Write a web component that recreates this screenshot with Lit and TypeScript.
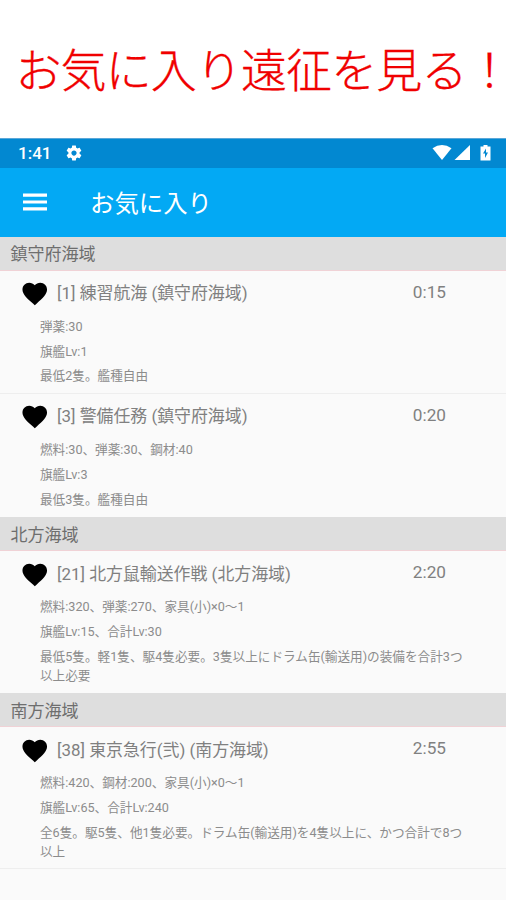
import { LitElement, html, css, svg } from "lit";
import { customElement, property } from "lit/decorators.js";

interface Expedition {
  no: number;
  name: string;
  time: string;
  details: string[];
}

interface Area {
  name: string;
  expeditions: Expedition[];
}

const AREAS: Area[] = [
  {
    name: "鎮守府海域",
    expeditions: [
      { no: 1, name: "練習航海", time: "0:15", details: ["弾薬:30", "旗艦Lv:1", "最低2隻。艦種自由"] },
      { no: 3, name: "警備任務", time: "0:20", details: ["燃料:30、弾薬:30、鋼材:40", "旗艦Lv:3", "最低3隻。艦種自由"] },
    ],
  },
  {
    name: "北方海域",
    expeditions: [
      {
        no: 21,
        name: "北方鼠輸送作戦",
        time: "2:20",
        details: [
          "燃料:320、弾薬:270、家具(小)×0〜1",
          "旗艦Lv:15、合計Lv:30",
          "最低5隻。軽1隻、駆4隻必要。3隻以上にドラム缶(輸送用)の装備を合計3つ以上必要",
        ],
      },
    ],
  },
  {
    name: "南方海域",
    expeditions: [
      {
        no: 38,
        name: "東京急行(弐)",
        time: "2:55",
        details: [
          "燃料:420、鋼材:200、家具(小)×0〜1",
          "旗艦Lv:65、合計Lv:240",
          "全6隻。駆5隻、他1隻必要。ドラム缶(輸送用)を4隻以上に、かつ合計で8つ以上",
        ],
      },
    ],
  },
];

const heart = svg`<path d="M12 21.35l-1.45-1.32C5.4 15.36 2 12.28 2 8.5 2 5.42 4.42 3 7.5 3c1.74 0 3.41.81 4.5 2.09C13.09 3.81 14.76 3 16.5 3 19.58 3 22 5.42 22 8.5c0 3.78-3.4 6.86-8.55 11.54L12 21.35z"/>`;
const gear = svg`<path d="M19.43 12.98c.04-.32.07-.64.07-.98s-.03-.66-.07-.98l2.11-1.65c.19-.15.24-.42.12-.64l-2-3.46c-.12-.22-.39-.3-.61-.22l-2.49 1c-.52-.4-1.08-.73-1.69-.98l-.38-2.65C14.46 2.18 14.25 2 14 2h-4c-.25 0-.46.18-.49.42l-.38 2.65c-.61.25-1.17.59-1.69.98l-2.49-1c-.23-.09-.49 0-.61.22l-2 3.46c-.13.22-.07.49.12.64l2.11 1.65c-.04.32-.07.65-.07.98s.03.66.07.98l-2.11 1.65c-.19.15-.24.42-.12.64l2 3.46c.12.22.39.3.61.22l2.49-1c.52.4 1.08.73 1.69.98l.38 2.65c.03.24.24.42.49.42h4c.25 0 .46-.18.49-.42l.38-2.65c.61-.25 1.17-.59 1.69-.98l2.49 1c.23.09.49 0 .61-.22l2-3.46c.12-.22.07-.49-.12-.64l-2.11-1.65zM12 15.5c-1.93 0-3.5-1.57-3.5-3.5s1.57-3.5 3.5-3.5 3.5 1.57 3.5 3.5-1.57 3.5-3.5 3.5z"/>`;

@customElement("expedition-row")
export class ExpeditionRow extends LitElement {
  @property({ attribute: false }) item!: Expedition;
  @property() area = "";

  static styles = css`
    :host {
      display: block;
      box-sizing: border-box;
      padding-bottom: 1.2px;
      border-bottom: 1px solid #eeeeee;
    }
    :host([flush]) { border-bottom-color: transparent; }
    .head {
      display: flex;
      align-items: center;
      height: 42.5px;
      padding: 0 60px 0 20px;
      margin-bottom: 3.8px;
      font-size: 16.9px;
      color: #808080;
    }
    .heart { width: 29.5px; height: 29.5px; margin: 4.6px 7.5px 0 0; fill: #000; flex: none; }
    .name { flex: 1; white-space: nowrap; }
    .time { font-size: 17.2px; }
    .detail {
      margin: 0 40px 5.8px;
      font-size: 12.63px;
      line-height: 19px;
      color: #8c8c8c;
    }
    .detail:last-child { margin-bottom: 6px; }
  `;

  render() {
    return html`
      <div class="head">
        <svg class="heart" viewBox="0 0 24 24">${heart}</svg>
        <span class="name">[${this.item.no}] ${this.item.name} (${this.area})</span>
        <span class="time">${this.item.time}</span>
      </div>
      ${this.item.details.map((d) => html`<div class="detail">${d}</div>`)}
    `;
  }
}

@customElement("app-root")
export class AppRoot extends LitElement {
  static styles = css`
    :host {
      display: block;
      height: 900px;
      overflow: hidden;
      background: #fafafa;
      font-family: Roboto, "Noto Sans CJK JP", sans-serif;
      text-spacing-trim: space-all;
    }
    .banner {
      display: flex;
      align-items: center;
      box-sizing: border-box;
      height: 138px;
      padding: 0 0 5px 15.5px;
      background: #fff;
      color: #f00000;
      font: 300 46px/66px "Noto Sans CJK JP", sans-serif;
      letter-spacing: -0.9px;
      white-space: nowrap;
      -webkit-text-stroke: 0.3px #f00000;
    }
    .mark { margin-left: 11.5px; font-feature-settings: "halt"; }
    .status {
      display: flex;
      align-items: center;
      box-sizing: border-box;
      height: 30px;
      padding: 0 14px 1px 18px;
      background: #0288d1;
      border-top: 1px solid #5aa7d8;
      color: #fff;
      font-size: 17px;
      font-weight: 500;
    }
    .gear { width: 18px; height: 18px; margin-left: 14px; fill: #fff; }
    .signals { margin-left: auto; width: 60px; height: 18px; fill: #fff; }
    .bolt { fill: #0288d1; }
    .toolbar {
      display: flex;
      align-items: center;
      box-sizing: border-box;
      height: 68.5px;
      padding: 0 0 1px 23px;
      background: #03a9f4;
      color: #fff;
      font-size: 24.4px;
    }
    .menu { width: 24px; height: 18px; margin: 1px 43px 0 0; fill: #fff; }
    .title { margin-top: -1px; }
    .area {
      display: flex;
      align-items: center;
      box-sizing: border-box;
      height: 34.1px;
      padding: 0 0 0.5px 10.5px;
      background: #dedede;
      border-bottom: 1px solid #f0d2d6;
      font-size: 17px;
      color: #6e6e6e;
    }
  `;

  render() {
    return html`
      <div class="banner"><span>お気に入り遠征を見る</span><span class="mark">！</span></div>
      <div class="status">
        <span>1:41</span>
        <svg class="gear" viewBox="0 0 24 24">${gear}</svg>
        <svg class="signals" viewBox="0 0 60 18">
          <path d="M0.500 4.200Q10-2.200 19.500 4.200L10 16z" />
          <path d="M38 1v15H22.500z" />
          <path d="M48.500 2.500h3V1h4v1.500h3V16.500h-10z" />
          <path class="bolt" d="M54 4.500l-3 5h2v4.500l3-5.500h-2z" />
        </svg>
      </div>
      <div class="toolbar">
        <svg class="menu" viewBox="0 0 24 18">
          <path d="M0 .5h24v3.200H0zM0 7.400h24v3.200H0zM0 14.300h24v3.200H0z" />
        </svg>
        <span class="title">お気に入り</span>
      </div>
      ${AREAS.map(
        (a) => html`
          <div class="area">${a.name}</div>
          ${a.expeditions.map(
            (e, i) => html`<expedition-row
              .item=${e}
              .area=${a.name}
              ?flush=${i === a.expeditions.length - 1 && a !== AREAS[AREAS.length - 1]}
            ></expedition-row>`
          )}
        `
      )}
    `;
  }
}
